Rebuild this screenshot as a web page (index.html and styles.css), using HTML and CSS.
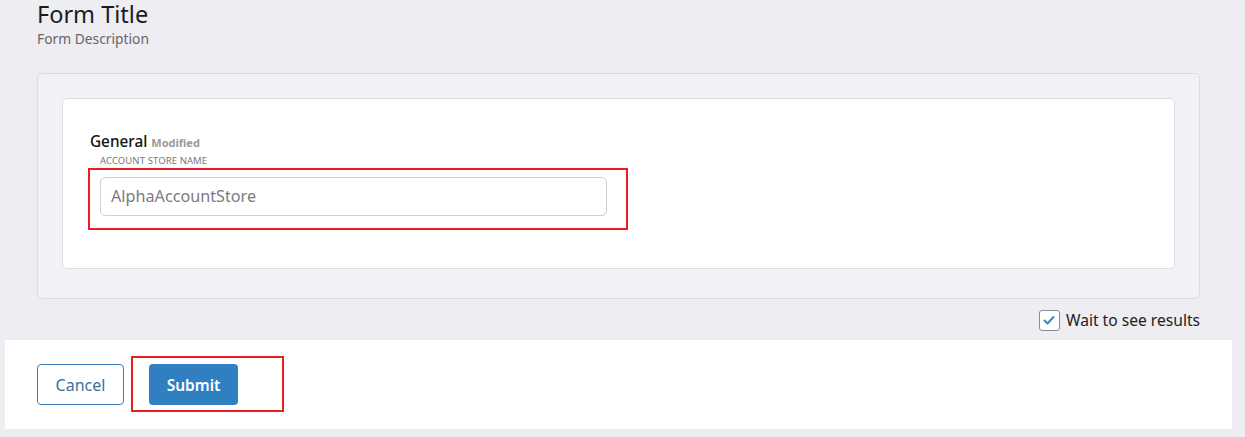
FILE: index.html
```html
<!DOCTYPE html>
<html>
<head>
<meta charset="utf-8">
<link rel="stylesheet" href="styles.css">
</head>
<body>
<div class="page">
  <div class="header">
    <h1 class="title">Form Title</h1>
    <div class="desc">Form Description</div>
  </div>
  <div class="outer-card">
    <div class="inner-card">
      <div class="section-title">General <span class="modified">Modified</span></div>
      <div class="field-wrap">
        <div class="field-label">ACCOUNT STORE NAME</div>
        <div class="highlight">
          <div class="input">AlphaAccountStore</div>
        </div>
      </div>
    </div>
  </div>
  <div class="wait-row">
    <label class="wait">
      <span class="checkbox">
        <svg width="14" height="14" viewBox="0 0 14 14"><path d="M2.5 7.5 L5.5 10.5 L11.5 4" fill="none" stroke="#3a86c8" stroke-width="2" stroke-linecap="round" stroke-linejoin="round"/></svg>
      </span>
      <span class="wait-text">Wait to see results</span>
    </label>
  </div>
</div>
<div class="footer">
  <button class="btn btn-cancel">Cancel</button>
  <div class="highlight-btn">
    <button class="btn btn-submit">Submit</button>
  </div>
</div>
</body>
</html>
```

FILE: styles.css
```css
* { box-sizing: border-box; }
html, body {
  margin: 0;
  padding: 0;
  background: #ededf2;
  font-family: "Noto Sans", "Open Sans", sans-serif;
  color: #222;
}
.page {
  padding: 0 45px 0 37px;
}
.header {
  padding-top: 0;
  height: 73px;
}
.title {
  margin: 0;
  font-weight: 400;
  font-size: 23.5px;
  line-height: 29px;
  color: #1c1c1c;
}
.desc {
  font-size: 13.8px;
  line-height: 17px;
  color: #666;
  margin-top: 1px;
}
.outer-card {
  background: #f1f1f6;
  border: 1px solid #dcdde3;
  border-radius: 5px;
  padding: 24px 24px 29px 24px;
  height: 226px;
}
.inner-card {
  background: #fff;
  border: 1px solid #dcdde3;
  border-radius: 5px;
  height: 171px;
  padding: 33px 0 0 27px;
}
.section-title {
  font-size: 15.3px;
  line-height: 19px;
  color: #111;
  font-weight: 500;
}
.modified {
  font-size: 11px;
  font-weight: 700;
  color: #9a9a9a;
}
.field-wrap {
  margin-top: 3px;
}
.field-label {
  font-size: 9.5px;
  line-height: 12px;
  color: #777;
  padding-left: 10px;
  letter-spacing: 0.1px;
}
.highlight {
  width: 540px;
  height: 62px;
  border: 2px solid #ec1c24;
  margin-top: 1px;
  margin-left: -2px;
  padding: 7px 0 0 10px;
}
.input {
  width: 507px;
  height: 39px;
  border: 1px solid #cfd0d6;
  border-radius: 5px;
  background: #fff;
  font-size: 16.2px;
  line-height: 37px;
  padding-left: 10px;
  color: #7b7b80;
}
.wait-row {
  display: flex;
  justify-content: flex-end;
  padding-top: 10px;
  height: 41px;
}
.wait {
  display: flex;
  align-items: center;
  gap: 6px;
  height: 22px;
}
.checkbox {
  width: 21px;
  height: 21px;
  border: 1px solid #8a8a92;
  border-radius: 3px;
  background: #fff;
  display: flex;
  align-items: center;
  justify-content: center;
}
.wait-text {
  font-size: 15.6px;
  color: #222;
}
.footer {
  margin: 0 13px 0 5px;
  background: #fff;
  height: 89px;
  display: flex;
  align-items: flex-start;
  padding: 16px 0 0 32px;
}
.btn {
  font-family: "Noto Sans", "Open Sans", sans-serif;
  height: 41px;
  border-radius: 4px;
  cursor: pointer;
  margin: 0;
  padding: 0;
}
.btn-cancel {
  margin-top: 8px;
  width: 87px;
  background: #fff;
  border: 1px solid #3d7fb5;
  color: #3a6f9e;
  font-size: 16px;
}
.highlight-btn {
  margin-left: 7px;
  width: 153px;
  height: 56px;
  border: 2px solid #ec1c24;
  padding: 6px 0 0 16px;
}
.btn-submit {
  width: 89px;
  background: #2f7fc1;
  border: none;
  color: #fff;
  font-weight: 600;
  font-size: 15.5px;
}
```
